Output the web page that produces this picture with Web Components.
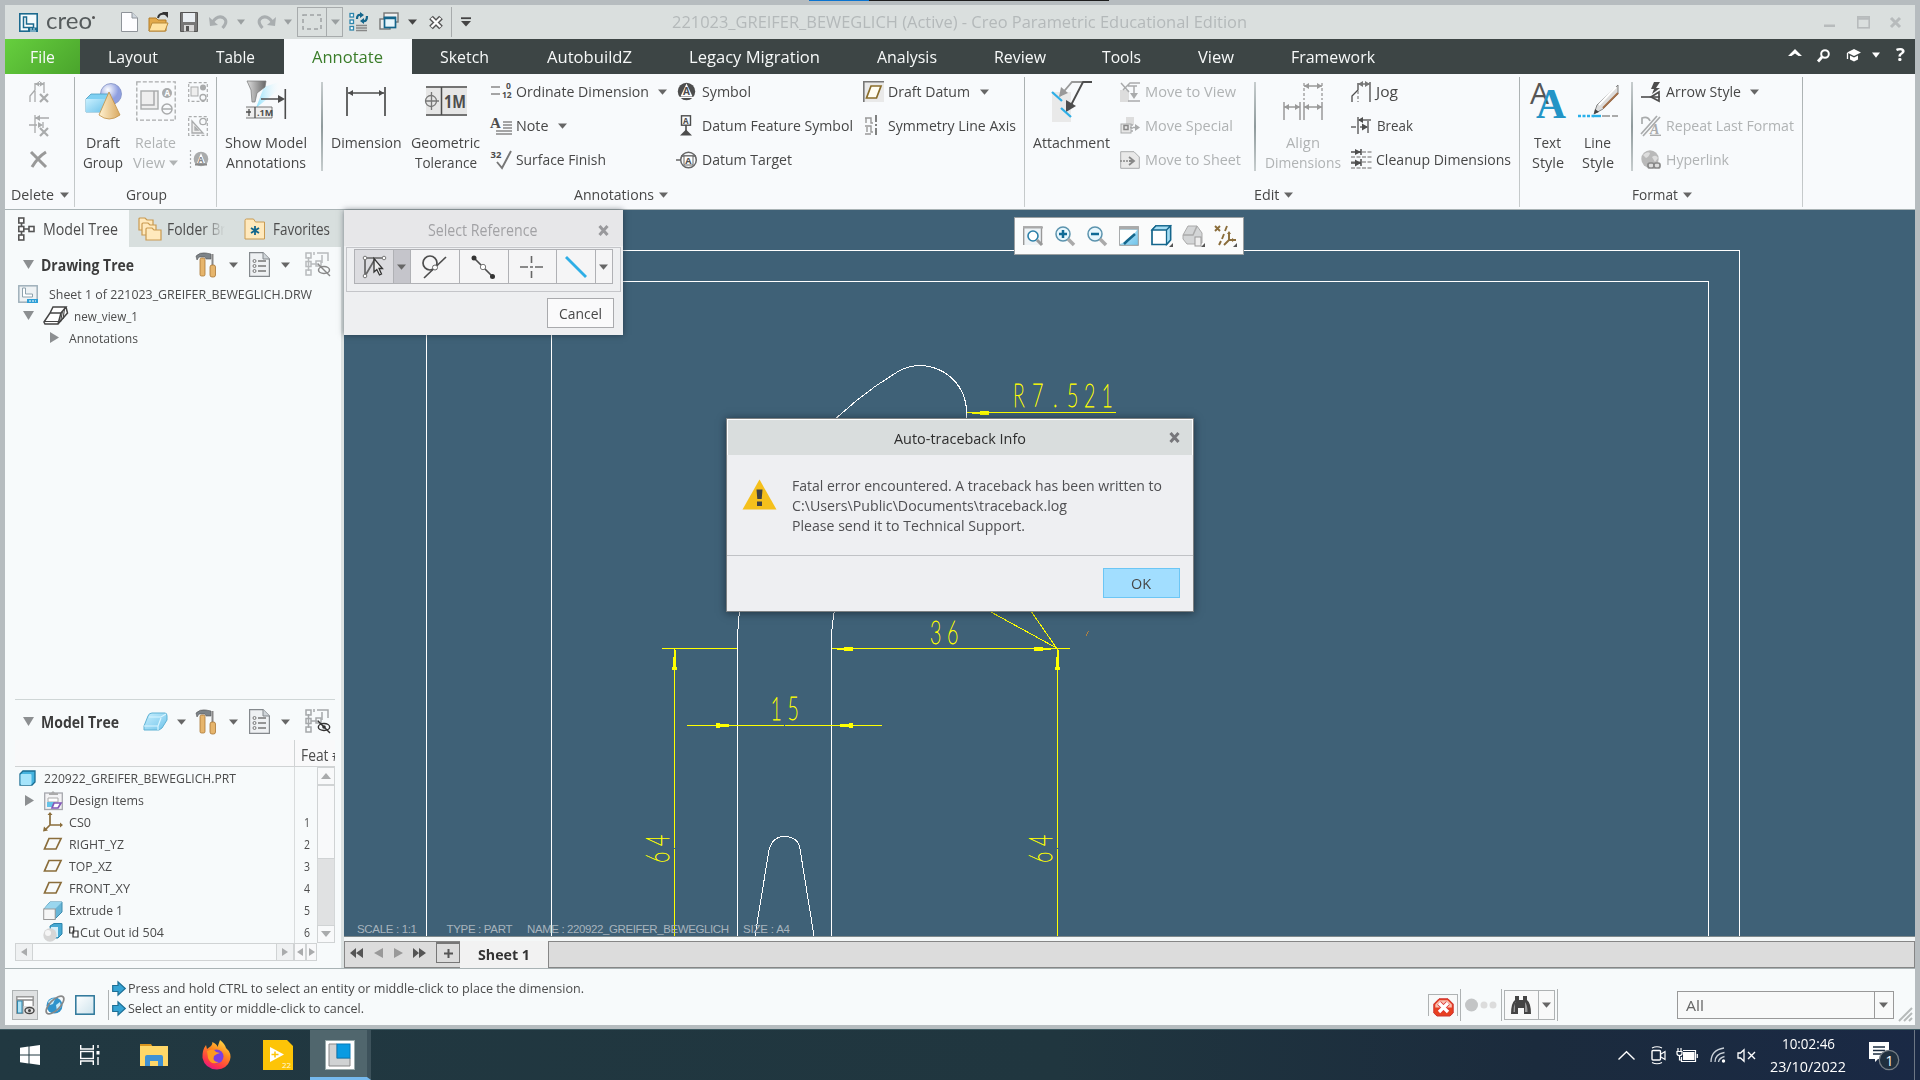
<!DOCTYPE html>
<html lang="en"><head><meta charset="utf-8"><title>Creo Parametric</title>
<style>
html,body{margin:0;width:1920px;height:1080px;overflow:hidden;font-family:"Open Sans","Noto Sans",sans-serif;color:#474747}
</style></head><body><creo-desktop></creo-desktop>
<script>
const BASE=`<style>*{box-sizing:border-box}:host{display:block}.r{display:flex;align-items:center;overflow:visible}.r>div{flex:none;display:flex;align-items:center;white-space:nowrap}.top{align-items:flex-start}svg{display:block;overflow:visible;flex:none}</style>`;
function def(name,html,setup){
  customElements.define(name,class extends HTMLElement{
    constructor(){super();this.attachShadow({mode:'open'}).innerHTML=BASE+(typeof html==='function'?'':html);}
    connectedCallback(){if(typeof html==='function')this.shadowRoot.innerHTML=BASE+html(this);if(setup)setup(this);}
  });
}
/* Lays cells [x, width, html] out in a flex row; x is measured from the window's left edge, start is the row's own. */
function row(start,h,cells,cls='',style=''){
  let p=start,o='';
  for(const [x,w,html] of cells){o+=`<div style="margin-left:${(x-p).toFixed(2)}px;width:${w}px">${html}</div>`;p=x+w;}
  return `<div class="r ${cls}" style="height:${h}px;${style}">${o}</div>`;
}
const ft=(w,s,size=15,style='')=>`<fit-text w="${w}" style="font-size:${size}px;${style}">${s}</fit-text>`;
const T=(a,b,s,size,style)=>[a,b-a,ft(b-a,s,size,style)];
const svg=(w,h,b)=>`<svg width="${w}" height="${h}" viewBox="0 0 ${w} ${h}">${b}</svg>`;
const I=(x,n)=>[x,ICON[n][0],svg(ICON[n][0],ICON[n][1],ICON[n][2])];
const ic=n=>svg(...ICON[n]);
const caret=(c='#666',w=9)=>svg(w,6,`<path d="M0 .5H${w}L${w/2} 5.8Z" fill="${c}"/>`);
const C=(x,c,w)=>[x-.5,w||9,caret(c,w)];

const K='#4d4d4d',G='#a9abac';
const st=(c,w=1.5)=>`fill="none" stroke="${c}" stroke-width="${w}"`;
const tx=(x,y,s,size,c,extra='')=>`<text x="${x}" y="${y}" font-size="${size}" fill="${c}" font-family="Open Sans" font-weight="700" ${extra}>${s}</text>`;
const gears=`<defs><linearGradient id="gb" x1="0" y1="0" x2="1" y2="1"><stop offset="0" stop-color="#c9f0ff"/><stop offset="1" stop-color="#6fc3ea"/></linearGradient><linearGradient id="gc" x1="0" x2="1"><stop offset="0" stop-color="#fff1d0"/><stop offset="1" stop-color="#d9a961"/></linearGradient><radialGradient id="gs" cx=".35" cy=".3"><stop offset="0" stop-color="#fff"/><stop offset="1" stop-color="#8f9fe0"/></radialGradient></defs>`;
const hdim=(x1,x2,y,c)=>`<path d="M${x1} ${y}H${x2}" ${st(c,1.5)}/><path d="M${x1} ${y}l5 -3v6zM${x2} ${y}l-5 -3v6z" fill="${c}"/>`;
const ICON={
 logo:[19,19,`<rect x=".8" y=".8" width="17.4" height="17.4" fill="#f4fafc" stroke="#1c6a8e" stroke-width="1.6"/><path d="M4.5 4h3v7h7v3.500h-10z" fill="#fff" stroke="#1c6a8e" stroke-width="1.5"/><rect x="9" y="14.500" width="10" height="4.500" fill="#1c6a8e"/><path d="M11 16h2m1 0h2m-5 2h6" stroke="#cfe8f2"/>`],
 doc:[17,20,`<path d="M.5 .5H11L16.500 6V19.500H.5Z" fill="#fdfdff" stroke="#8e9399"/><path d="M11 .5V6h5.500" fill="#cfd7de" stroke="#8e9399"/>`],
 open:[21,20,`<path d="M1 6h7l2 2h8v11H1z" fill="#e2a94a" stroke="#b27d28"/><path d="M4 11H20L17 19H1z" fill="#ffe2a0" stroke="#b98a3a"/><path d="M10 6q1-5 7-4" ${st('#333',2)}/><path d="M14 0h6v6z" fill="#333"/>`],
 save:[18,20,`<path d="M.5 .5h17v19h-17z" fill="#777" stroke="#555"/><rect x="3" y="1" width="12" height="9" fill="#e9eef2"/><rect x="4" y="13" width="10" height="6.500" fill="#d8d8d8"/><rect x="6" y="14" width="3" height="5" fill="#555"/>`],
 undo:[20,18,`<path d="M3 10Q8 2 14 4.500Q20 8 13.500 15" ${st('#a9aeb0',3)}/><path d="M0 4l1 9 8-1z" fill="#a9aeb0"/>`],
 redo:[20,18,`<path d="M17 10Q12 2 6 4.500Q0 8 6.500 15" ${st('#a9aeb0',3)}/><path d="M20 4l-1 9-8-1z" fill="#a9aeb0"/>`],
 selbox:[20,16,`<rect x="1" y="1" width="18" height="14" ${st('#9ea3a4',1.500)} stroke-dasharray="4 3"/>`],
 regen:[20,20,`<g fill="#fff" stroke="#2e86ad" stroke-width="1.300"><rect x="1" y="1.500" width="3.500" height="3.500"/><rect x="1" y="8" width="3.500" height="3.500"/><rect x="1" y="14.500" width="3.500" height="3.500"/></g><path d="M7 13.500h11M7 16h11M7 18.500h11" ${st('#888',1.300)}/><path d="M8 7Q8 2 12 3M18 4Q18 10 14 9" ${st('#14668c',2.200)}/><path d="M11 0l4 3-4 3zM15 6l-4 3 4 3z" fill="#14668c"/>`],
 wins:[21,20,`<rect x="5" y="1" width="14" height="9" fill="#f1f1f1" stroke="#777" stroke-width="1.400"/><rect x="1" y="7" width="10" height="10" fill="#eee" stroke="#777" stroke-width="1.400"/><rect x="5.500" y="5.500" width="11" height="10" fill="#e8f6fc" stroke="#14668c" stroke-width="1.700"/><path d="M5 6h12" stroke="#14668c" stroke-width="2.500"/>`],
 xbox:[14,13,`<path d="M2 1.500L12 11.500M12 1.500L2 11.500" ${st('#555',5.200)}/><path d="M2.500 2L11.500 11M11.500 2L2.500 11" ${st('#fff',2.400)}/>`],
 qmore:[10,11,`<path d="M0 1.200H10" ${st('#444',1.800)}/><path d="M0 4H10L5 9.500Z" fill="#444"/>`],
 min:[11,13,`<rect y="8.500" width="11" height="2.500" fill="#b7bbbc"/>`],
 max:[13,13,`<rect x=".8" y=".8" width="11.400" height="11" ${st('#b7bbbc',1.600)}/><path d="M0 2.500H13" ${st('#b7bbbc',2.500)}/>`],
 cls:[11,11,`<path d="M1 1L10 10M10 1L1 10" ${st('#b7bbbc',3)}/>`],
 up:[14,12,`<path d="M0 7L7 0L14 7H10.500L7 4.500L3.500 7Z" fill="#fff"/>`],
 find:[13,13,`<circle cx="8" cy="5" r="3.800" ${st('#fff',2)}/><path d="M5 8L1 12.500" ${st('#fff',2.800)}/>`],
 grad:[15,13,`<path d="M8 0l7 3.500-7 3.500-7-3.500z M4 6.500l4 2 4-2v4l-4 2-4-2z" fill="#fff"/><path d="M1.500 4v6" ${st('#fff',1.300)}/>`],
 d1:[20,22,`<path d="M6 2V9L1 15V21M15 1V12M6 10V21" ${st(G,1.300)}/>${hdim(6,15,3,G)}<path d="M11 13l8 8m0-8l-8 8" ${st(G,2.200)}/>`],
 d2:[20,22,`<path d="M0 10h8M6 0v18M6 3h14M14 7v6" ${st(G,1.300)}/><path d="M6 3l5-3v6zM14 10l-5-3v6z" fill="${G}"/><path d="M11 13l8 8m0-8l-8 8" ${st(G,2.200)}/>`],
 d3:[18,17,`<path d="M1 1L16 16M16 1Q8 6 2 16" ${st('#999',3)}/>`],
 draft:[37,37,`${gears}<circle cx="26" cy="11" r="10.500" fill="url(#gs)" stroke="#8290c4" stroke-width=".8"/><path d="M1 16l5-5h19v13l-5 5H1z" fill="#7fd0f2" stroke="#4a9cc0" stroke-width=".8"/><path d="M1 16h19v13H1z" fill="url(#gb)"/><path d="M24 9L14 32Q24 40 35 32Z" fill="url(#gc)" stroke="#c29045" stroke-width=".8"/>`],
 relate:[40,40,`<rect x=".8" y=".8" width="38.400" height="38.400" ${st(G,1.300)} stroke-dasharray="4 2"/><rect x="5" y="10" width="17" height="18" fill="#eee" stroke="${G}" stroke-width="1.400"/><path d="M18 10v14H5" ${st(G)}/><circle cx="31" cy="12" r="5" fill="${G}"/>${tx(28.500,15,'A',8,'#fff')}<circle cx="31" cy="28" r="5" ${st(G)}/><path d="M26 28h10" ${st(G)}/>`],
 g1:[20,20,`<rect x=".7" y=".7" width="18.600" height="18.600" ${st(G,1.200)} stroke-dasharray="3 2"/><rect x="3" y="5" width="7" height="9" fill="#eee" stroke="${G}"/><circle cx="15" cy="5.500" r="3" fill="${G}"/><circle cx="15" cy="15.500" r="3" ${st(G,1.300)}/>`],
 g2:[20,20,`<rect x=".7" y=".7" width="18.600" height="18.600" ${st(G,1.200)} stroke-dasharray="3 2"/><path d="M4 5V17H15ZM7 11v3h3z" fill="#eee" stroke="${G}" stroke-width="1.300"/><circle cx="15" cy="5.500" r="3.200" ${st(G,1.300)}/>`],
 g3:[20,20,`<path d="M1.500 0v20" ${st(G,1.200)} stroke-dasharray="2 2"/><circle cx="12" cy="9" r="7.300" fill="${G}"/><path d="M12 3L8 13h8z" fill="#fff"/>${tx(9,12.500,'A',8,'#888')}<path d="M6 14.500h12" ${st('#888',2)}/>`],
 show:[41,40,`<defs><linearGradient id="gl" x1="0" x2="1"><stop offset="0" stop-color="#8de0fb"/><stop offset="1" stop-color="#fff" stop-opacity="0"/></linearGradient><linearGradient id="gm" x1="0" x2="1"><stop stop-color="#ddd"/><stop offset="1" stop-color="#666"/></linearGradient></defs><path d="M18 6L36 0V6L10 27Z" fill="url(#gl)"/><path d="M1 0h19l-1 6-8 6-2 9H6L5 9Z" fill="url(#gm)" stroke="#777" stroke-width=".7"/><path d="M39.300 8V38M15 18H36" ${st(K,1.600)}/><path d="M39 18l-7-4v8z" fill="${K}"/><path d="M0 26H26V37H0" fill="#eee" stroke="#777"/><path d="M9 26v11M0 31h5M3 28v7" ${st(K,1.300)}/>${tx(11,35,'.1M',9,K)}`],
 dim:[40,32,`<path d="M1 2V31M39 2V31" ${st(K,1.700)}/>${hdim(2,38,8,K)}`],
 geo:[41,30,`<rect width="41" height="30" fill="#e6e6e6"/><path d="M0 1H41M0 29H41M15.500 1V29" ${st(K,1.500)}/><circle cx="5" cy="15" r="5.500" ${st('#777',1.300)}/><path d="M0 15h13M5.500 6v18" ${st('#777',1.300)}/>${tx(18,22,'1M',18,K,'textLength="22" lengthAdjust="spacingAndGlyphs"')}`],
 ord:[21,20,`<path d="M0 5h9M0 12h9" ${st('#888',1.500)}/>${tx(15,6.500,'0',8.500,K)}${tx(11,15.500,'12',8.500,K)}`],
 note:[21,20,`<text x="-1" y="12" font-size="15" font-weight="700" fill="${K}" font-family="Liberation Serif">A</text><path d="M12 6h9M12 9h9M12 12h9M5 15h16M5 18h16" ${st('#888',1.500)}/>`],
 surf:[21,20,`${tx(-.5,7.500,'32',9.500,K)}<path d="M6 12L11 18L20 1" ${st('#777',1.900)}/>`],
 sym:[19,20,`<circle cx="9.500" cy="9.500" r="8.700" fill="${K}"/><path d="M9.500 1.500L3.500 14.500H15.500Z" fill="#fff"/>${tx(6,13,'A',10,K)}<path d="M2 15.500h15" ${st('#fff',1)}/>`],
 dfs:[14,21,`<rect x="2.500" y=".8" width="9" height="9.400" ${st(K,1.400)}/>${tx(4,8.800,'A',8,K)}<path d="M7 10v7" ${st(K,1.600)}/><path d="M1 20.500L7 14.500L13 20.500Z" fill="${K}"/>`],
 dtg:[21,20,`<circle cx="12.500" cy="10" r="7.800" ${st('#666',1.500)}/><path d="M0 10h4M5 6h15" ${st('#666',1.500)}/><rect x="8" y="6" width="9" height="9" fill="#fff" stroke="#666"/>${tx(9.200,14,'A',9,K)}`],
 dd:[21,21,`<rect width="21" height="21" fill="#e9e9e9"/><path d="M.8 21V.8H21" ${st('#777',1.600)}/><path d="M8 5H18L13.500 17H3.500Z" fill="#fffdf2" stroke="#8a6d2b" stroke-width="1.700"/>`],
 sla:[14,21,`<path d="M1 3h6v5h2M2 3v5M1 11h6v6h2M3 12v5M1 19h6" ${st('#999',1.400)}/><path d="M12 0v21" ${st(K,1.400)} stroke-dasharray="7 2 2 2"/>`],
 att:[40,41,`<rect y="11" width="19" height="30" fill="#e9e9e9"/><path d="M30 1H20L8 15" ${st('#999',1.800)}/><path d="M7 16l2-10 7 6z" fill="#999"/><path d="M40 1H31L17 28" ${st(K,1.900)}/><path d="M14 31l0-12 10 6z" fill="${K}"/><path d="M0 11L10 20M9 27L19 36" ${st('#2eaee6',2.300)}/>`],
 mv:[20,20,`<path d="M0 8h9v12H0z" fill="#ddd"/><path d="M1 1l8 9M20 1H10L3 8M8 4h9M14 4v10M8 19h12" ${st(G,1.500)}/><path d="M10 11h8l-4 6z" fill="${G}"/>`],
 ms:[20,20,`<path d="M6 1h8v8H6z" fill="#ddd"/><rect x="1" y="8" width="10" height="9" fill="#e6e6e6" stroke="${G}"/><rect x="4" y="9.500" width="4" height="4" ${st('#888')}/><path d="M10 11.500h5M12 8v9" ${st(G,1.500)} stroke-dasharray="2 1"/><path d="M15 8l5 3.500-5 3.500z" fill="${G}"/>`],
 msh:[20,18,`<path d="M.7 .7H14L19.300 6V17.300H.7Z" fill="#e9e9e9" stroke="${G}"/><path d="M0 10h9" ${st('#888')} stroke-dasharray="2 1"/><path d="M9 10h4M9 6l5 4-5 4" ${st('#888',1.800)}/>`],
 algn:[40,38,`<path d="M21 1V18M39 1V18" ${st('#999',1.300)} stroke-dasharray="3 2"/>${hdim(21,39,4,'#999')}<path d="M1 20V38M17 20V38M21 20V38M39 20V38" ${st('#999',1.500)}/>${hdim(1,17,25,'#999')}${hdim(21,39,25,'#999')}`],
 jog:[20,22,`<path d="M1 21V15L7 9V2M19 1V21" ${st(K,1.300)}/><path d="M7 10V21" ${st('#888',1.300)} stroke-dasharray="3 2"/>${hdim(7,19,3,'#777')}`],
 brk:[20,20,`<path d="M0 11h5M7 1v17M17 5v12M8 4h12M9 11h7" ${st('#666',1.500)}/><path d="M7 4l5-3v6zM17 11l-6-3.500v7z" fill="${K}"/>`],
 cln:[21,21,`<path d="M0 8h21M0 13h21M0 19h21M11 3h10" ${st('#999',1.300)} stroke-dasharray="4 1.500"/><path d="M0 3h10M0 14h10M10 0v6M10 10v7" ${st(K,1.500)}/><path d="M4 0l6 3-6 3zM4 10.500l6 3.500-6 3.500z" fill="${K}"/>`],
 txs:[36,38,`<text x="0" y="22" font-size="30" fill="#555" font-family="Open Sans" textLength="19" lengthAdjust="spacingAndGlyphs">A</text><text x="6" y="36" font-size="43" fill="#2394c6" font-weight="700" font-family="Liberation Serif" textLength="30" lengthAdjust="spacingAndGlyphs">A</text>`],
 lns:[40,33,`<path d="M0 31H16" ${st('#28b0ea',2.400)} stroke-dasharray="3 1.500"/><path d="M15 31h8" ${st('#28b0ea',2.400)}/><path d="M24 31H40" ${st('#aaa',2)} stroke-dasharray="8 2"/><path d="M40 0L19 20L16 29L25 24L40 9Z" fill="#ddd" stroke="#777" stroke-width=".9"/><path d="M40 8L25 23" ${st('#a3704a',2)}/><path d="M38 2L21 20" ${st('#fff',2)}/><path d="M16 29l1-5 4 3z" fill="#444"/>`],
 arr:[20,20,`<path d="M0 15H19" ${st(K,1.600)}/><path d="M19 0H13L10 7H13L11 12L19 6H15Z" fill="${K}"/><path d="M18 10L10 15L18 19Z" ${st(K,1.700)}/>`],
 rep:[20,20,`<path d="M1 8V2Q7 0 9 5M2 20L19 1M0 18L16 0" ${st(G,1.700)}/><text x="9" y="18" font-size="14" font-style="italic" font-weight="700" fill="${G}" font-family="Liberation Serif">A</text><path d="M9 19.300h11" ${st(G,1.400)}/>`],
 hyp:[20,20,`<circle cx="9" cy="9" r="8.700" fill="#b9b9b9"/><path d="M2 5q4-4 7-2q-1 4-4 5zM11 7q4-3 6 1l-3 4z" fill="#ddd"/><rect x="7" y="13" width="6" height="5" rx="2" fill="#ddd" stroke="#888" stroke-width="1.700"/><rect x="13" y="13" width="6" height="5" rx="2" fill="#ddd" stroke="#888" stroke-width="1.700"/>`],
 tree:[17,24,`<g fill="#fff" stroke="#555" stroke-width="1.600"><path d="M3.500 5v14M4 12h8"/><rect x=".8" y="1" width="5" height="5"/><rect x=".8" y="9.500" width="5" height="5"/><rect x=".8" y="18" width="5" height="5"/><rect x="11" y="9.500" width="5" height="5"/></g>`],
 folders:[24,24,`<g fill="#ffe9bd" stroke="#c99a50" stroke-width="1.200"><path d="M1 2q0-1 1-1h5l2 2h6v10H1z"/><path d="M4 7q0-1 1-1h5l2 2h6v10H4z"/><path d="M8 12q0-1 1-1h5l2 2h7v10H8z"/></g>`],
 fav:[22,22,`<path d="M1 2.500q0-1.500 1.500-1.500h7l2 3h9v17H1z" fill="#ffe9bd" stroke="#c99a50"/><path d="M11 8v9M7 10l8 5M15 10l-8 5" ${st('#14668c',1.800)}/>`],
 tools:[21,26,`<path d="M0 4q4-4 10-3l5 1v5h-5l-1-2H3L1 8z" fill="#7c8388" stroke="#555" stroke-width=".6"/><rect x="4" y="6" width="5" height="18" rx="1.500" fill="#e6b56c" stroke="#a87635" stroke-width=".8"/><path d="M16.500 2v12" ${st('#888',2)}/><rect x="14" y="13" width="5.500" height="12" rx="2" fill="#e6b56c" stroke="#a87635" stroke-width=".8"/>`],
 list:[21,25,`<path d="M.6 .6H14L20.400 7V24.400H.6Z" fill="#eef1f3" stroke="#84898d" stroke-width="1.200"/><path d="M14 .6V7h6.400" fill="#cfd5d9" stroke="#84898d"/><path d="M9 9h8M9 14h8M9 19h8" ${st('#777',1.300)}/><g ${st('#777',1)}><circle cx="5.500" cy="9" r="1.500"/><circle cx="5.500" cy="14" r="1.500"/><circle cx="5.500" cy="19" r="1.500"/></g>`],
 ftree:[26,25,`<g ${st('#b8bbbd',1.500)}><path d="M3.500 5v14M6 12h8M9 3V0M12 1h11v8M17 3v8"/><rect x="1" y="1" width="5" height="5"/><rect x="1" y="9.500" width="5" height="5"/><rect x="1" y="18" width="5" height="5"/><rect x="11" y="9" width="5" height="5"/></g><ellipse cx="19" cy="18" rx="5.500" ry="3.500" ${st('#888',1.500)}/><path d="M13 12L25 24" ${st('#888',1.400)}/>`],
 ftree2:[26,25,`<g ${st('#a5a8aa',1.500)}><path d="M3.500 5v14M6 12h8M9 3V0M12 1h11v8M17 3v8"/><rect x="1" y="1" width="5" height="5"/><rect x="1" y="9.500" width="5" height="5"/><rect x="1" y="18" width="5" height="5"/><rect x="11" y="9" width="5" height="5"/></g><ellipse cx="19" cy="18" rx="5.700" ry="3.500" ${st('#333',1.400)}/><circle cx="19" cy="18" r="1.800" fill="#333"/><path d="M13 12L25 24" ${st('#333',1.400)}/>`],
 drw:[20,18,`<rect x=".8" y=".8" width="18.400" height="16.400" fill="#eef2f4" stroke="#9fb0ba" stroke-width="1.500"/><path d="M4.500 3h3v6h7v3h-10z" fill="#fff" stroke="#8fa2ad"/><path d="M9 14h11v4H9z" fill="#2e9fd6"/><path d="M11 16h7" stroke="#fff" stroke-dasharray="2 1"/>`],
 view:[25,19,`<path d="M1 16L7 7L18 7L15 18H2Z M7 7L10 1H23L18 7M23 1L24.500 7L15 18" fill="#fff" stroke="#444" stroke-width="1.500"/><path d="M19.500 5l-2 11M21.500 3l-1.500 10M1 15.500h14" ${st('#444',1.100)}/>`],
 blue:[25,19,`${gears}<path d="M1 18V14L5 4Q6 1 9 1H22Q24 1 24 4V8L19 16L16 18Z" fill="url(#gb)" stroke="#5fb2d4"/><path d="M18 6l-3 8v4M6 5h12l5-3M1 14h14" ${st('#d9f5ff',1.200)}/>`],
 part:[17,16,`<path d="M1 4L4 1H16V12L13 15H1Z" fill="#45b3df" stroke="#1a6d92" stroke-width="1.300"/><rect x="1.500" y="4" width="11" height="11" rx="1" fill="#a5e4fb"/>`],
 design:[19,19,`<rect x=".7" y="2" width="17.600" height="16.500" fill="#f3f3f5" stroke="#a5a7ad" stroke-width="1.300"/><path d="M5 4V2h2l2-2 2 2h3v2z" fill="#aaa"/><path d="M4 7h10v4H4z" fill="#fff" stroke="#aaa"/><path d="M3 11h8v5H3z" fill="#64c3e8"/><path d="M10 12h7l-3 5H8z" fill="#fff" stroke="#8359b8" stroke-width="1.700"/>`],
 cs:[20,20,`<path d="M7 2V13H18M7 13L2 18" ${st('#8a6d3b',1.700)}/><path d="M7 0l2.500 3h-5zM20 13l-3 2.500v-5zM0 19.500l1-5 4 4z" fill="#8a6d3b"/>`],
 plane:[20,18,`<path d="M6 3.500H18L13 14H1.500Z" fill="none" stroke="#8a6d3b" stroke-width="1.700"/>`],
 ext:[20,19,`<path d="M1 8L7 1H19V11L12 18V8Z" fill="#68b5d6" stroke="#3f8cae"/><path d="M7 1H19L12 8H1z" fill="#9ad6ee"/><rect x=".7" y="8" width="11.500" height="10.500" fill="#f6f6f6" stroke="#999"/>`],
 cut:[20,19,`<path d="M7 3l4-2.500H19V11l-4 4H8z" fill="#47a9d3" stroke="#2c84aa"/><path d="M8 4h7v10H8z" fill="#d7f0fa"/><circle cx="7" cy="12" r="6.700" fill="#d6d6d6"/><circle cx="5" cy="10" r="3" fill="#f5f5f5"/>`],
 cpy:[10,12,`<path d="M.7 1h4v6h-4zM4 5h5v6H4z" fill="#fff" stroke="#333" stroke-width="1.200"/>`],
 zfit:[20,20,`<path d="M.7 19V1H18.500V19" fill="#eef3f6" stroke="#999" stroke-width="1.400"/><path d="M0 1.500h20" ${st('#aaa',2)}/><circle cx="10" cy="10" r="5" fill="#fff" stroke="#2a7fa8" stroke-width="1.600"/><path d="M14 14l5 5" ${st('#999',3)}/>`],
 zin:[20,20,`<circle cx="8" cy="8" r="7" fill="#e6f6fd" stroke="#5b93ad" stroke-width="1.500"/><path d="M4 8h8M8 4v8" ${st('#0f6a96',2.500)}/><path d="M13 13l6 6" ${st('#aaa',3.500)}/>`],
 zout:[20,20,`<circle cx="8" cy="8" r="7" fill="#e6f6fd" stroke="#5b93ad" stroke-width="1.500"/><path d="M4 8h8" ${st('#0f6a96',2.500)}/><path d="M13 13l6 6" ${st('#aaa',3.500)}/>`],
 repaint:[20,20,`${gears}<rect x=".7" y=".7" width="18.600" height="18.600" fill="url(#gb)" stroke="#999"/><path d="M0 2h20" ${st('#aaa',3)}/><path d="M1 4h17q-6 10-17 14z" fill="#fff"/><path d="M16 8L8 15l-3 3" ${st('#14668c',2.500)}/>`],
 cube:[22,22,`<path d="M1 5L5 .8H19.500V15L15.500 19.500H1Z" fill="#fff" stroke="#14668c" stroke-width="1.700"/><path d="M1 5L5 .8H19.500L15.500 5ZM15.500 5L19.500 1V15L15.500 19.500Z" fill="#a6ddf3" stroke="#14668c" stroke-width="1.300"/><path d="M22 18v4h-4z" fill="#555"/>`],
 house:[22,22,`<path d="M0 10L5 1H14L19 8V18L14 19H4L0 14Z" fill="#d3d5d6" stroke="#aaa"/><path d="M0 10h10l4-9" ${st('#aaa')}/><rect x="12" y="12" width="6" height="9" fill="#eee" stroke="#999"/><path d="M22 18v4h-4z" fill="#555"/>`],
 axes:[22,22,`<path d="M0 1l5 5m0-5l-5 5M12 1l-2 5M9 9l-2 5M6 16l-2 4M14 8v7h7M14 15l-5 5" ${st('#8a6d3b',1.900)}/><path d="M14 6l2 3h-4zM20 15l-3 2v-4z" fill="#8a6d3b"/><path d="M22 18v4h-4z" fill="#555"/>`],
 x:[11,11,`<path d="M1.500 1L9.500 10M9.500 1L1.500 10" ${st('#77777b',3)}/>`],
 x2:[11,11,`<path d="M1.500 1L9.500 10M9.500 1L1.500 10" ${st('#99999c',3)}/>`],
 s1:[24,24,`<path d="M3 3H22M3 21V3M3 21L13 4" ${st('#666',1.700)}/><g fill="#fff" stroke="#777"><circle cx="3" cy="3" r="1.800"/><circle cx="22" cy="3" r="1.800"/><circle cx="3" cy="21" r="1.800"/></g><path d="M12 3.500V17L14.800 14.500L17.500 20L19.500 19L17 13.500H20.500Z" fill="#eee" stroke="#333" stroke-width="1.300"/>`],
 s2:[25,24,`<circle cx="8" cy="8" r="7" ${st(K,1.700)}/><path d="M24 2L2 23" ${st(K,1.700)}/><circle cx="13" cy="12.500" r="2.500" fill="#fff" stroke="#666"/>`],
 s3:[25,24,`<path d="M3 3L21 21" ${st(K,1.700)}/><circle cx="3" cy="3" r="2.500" fill="#333"/><circle cx="21.500" cy="21.500" r="2.500" fill="#333"/><circle cx="12" cy="12" r="2.700" fill="#fff" stroke="#777"/>`],
 s4:[23,22,`<path d="M0 11H8M15 11H23M11.500 0V7M11.500 15V22M10 11h3" ${st('#666',1.600)}/>`],
 s5:[22,22,`<path d="M1 1L21 21" ${st('#2eaee6',2.800)}/>`],
 warn:[35,31,`<path d="M17.500 .5L34.500 30.500H.5Z" fill="#f5c01c"/><path d="M14.500 10.500h6l-.8 9.500h-4.400zM15 22.500h5v4.500h-5z" fill="#3f4144"/>`],
 nav:[18,18,`<rect x=".8" y=".8" width="16.400" height="16.400" fill="#fff" stroke="#999" stroke-width="1.500"/><path d="M1 4h16M7 4v13" ${st('#888')}/><rect x="1.500" y="5" width="4.500" height="12" fill="#aee2f6" stroke="#2e86ad"/><rect x="7.500" y="10" width="12" height="9" fill="#e0e0e0"/><ellipse cx="13.500" cy="14.500" rx="4.500" ry="3" ${st('#444',1.400)}/><circle cx="13.500" cy="14.500" r="1.500" fill="#444"/>`],
 globe:[20,20,`<circle cx="9.500" cy="10.500" r="8" fill="#2e93cc"/><path d="M3 7q4-5 7-3l-2 5-3 1zM11 10l4-3 1 5-4 4z" fill="#c4eaf9"/><ellipse cx="10" cy="10" rx="11.500" ry="5" ${st('#888',1.700)} transform="rotate(-45 10 10)"/>`],
 sq:[20,20,`<defs><linearGradient id="sq1" x1="0" y1="0" x2="1" y2="1"><stop stop-color="#fff"/><stop offset="1" stop-color="#cde3ec"/></linearGradient></defs><rect x=".8" y=".8" width="18.400" height="18.400" fill="url(#sq1)" stroke="#2b7699" stroke-width="1.500"/>`],
 msg:[14,15,`<path d="M.7 4.500H6V.8L13.300 7.500L6 14.200V10.500H.7Z" fill="#35a3d3" stroke="#1d6f96" stroke-width="1.200"/>`],
 stop:[21,18,`<path d="M6 .8H15L20.200 6V15L17 18H4L.8 15V6Z" fill="#e84020" stroke="#c33"/><path d="M6.500 2.200h8l4.300 4.300v3H2.300v-3z" fill="#f8c0b2"/><path d="M6 5l9 9m0-9l-9 9" ${st('#d33',5)}/><path d="M6 5l9 9m0-9l-9 9" ${st('#fff',3.300)}/>`],
 dots:[32,14,`<circle cx="6.500" cy="7" r="6.500" fill="#c3c5c6"/><circle cx="19" cy="7" r="3.500" fill="#dcdcdc"/><circle cx="28" cy="7" r="3.500" fill="#dcdcdc"/>`],
 bino:[20,19,`<path d="M4 0h4v4h4V0h4v4q4 3 4 14h-7v-6H7v6H0Q0 7 4 4z" fill="#444"/><path d="M4.500 6q-2 4-2 10h1.500V6zM14 6v10h2.500q0-7-2.500-10z" fill="#999"/>`],
 grip:[14,14,`<path d="M1 14L14 1M6 14L14 6M11 14l3-3" ${st('#b6baba',2)}/>`],
 win:[20,20,`<path d="M0 2.800L8.500 1.600V9.500H0ZM9.500 1.400L20 0V9.500H9.500ZM0 10.500H8.500V18.400L0 17.200ZM9.500 10.500H20V20L9.500 18.600Z" fill="#fff"/>`],
 tv:[20,20,`<path d="M.7 0V4H13.300V0M.7 20V16H13.300V20M18 0v3M18 12v8" ${st('#fff',1.400)}/><rect x=".7" y="6.500" width="12.600" height="7" ${st('#fff',1.400)}/><rect x="16.500" y="6" width="3" height="3.500" fill="#fff"/>`],
 fold:[28,24,`<path d="M0 1h11l2 3H0z" fill="#d9951f"/><path d="M0 3H28V23H0Z" fill="#ffd768"/><path d="M5 23V14q0-2 2-2h14q2 0 2 2v9h-5v-5h-8v5z" fill="#3f91d4"/>`],
 fox:[29,30,`<defs><linearGradient id="fx" x1=".8" y1="0" x2=".3" y2="1"><stop stop-color="#ffe14a"/><stop offset=".4" stop-color="#ff8a1e"/><stop offset=".8" stop-color="#ff3647"/><stop offset="1" stop-color="#e3168c"/></linearGradient></defs><path d="M18 0Q23 4 24 8Q30 13 28 20Q25 29 15 29.500Q3 29 .5 18Q0 10 4 5L5 9L9 6Q11 3 10 2Q15 4 15.500 7Z" fill="url(#fx)"/><circle cx="14.500" cy="16.500" r="7" fill="#7b3fe0"/><path d="M5 11Q12 8 14 12L18 13Q14 14 12 16Q10 22 17 22Q9 26 6 18Z" fill="#ff9a1f"/>`],
 yel:[30,30,`<path d="M0 0H24L30 6V30H0Z" fill="#fdc407"/><path d="M7 7V22L21 14.500Z" fill="#fff"/><path d="M8.500 14.500h7M12 11.500v6" ${st('#fdc407',1.500)}/><text x="19" y="27.500" font-size="8" fill="#fff8d8" font-family="Open Sans">22</text>`],
 app:[30,30,`<rect x=".5" y=".5" width="29" height="29" fill="#fff" stroke="#9aa"/><path d="M4 4H12V18H25V26H4Z" fill="#d0d2d3" stroke="#888"/><rect x="12" y="4" width="13" height="14" fill="#0a9be2" stroke="#067ab8"/>`],
 chev:[17,9,`<path d="M.5 8.500L8.500 .8L16.500 8.500" ${st('#fff',1.400)}/>`],
 cam:[15,18,`<rect x="1" y="4.500" width="8.500" height="9.500" rx="1" ${st('#fff',1.400)}/><path d="M10 8l4-2.500v8L10 11M1 2q5-2.500 10 0M1 16.500q5 2.500 10 0" ${st('#fff',1.200)}/>`],
 bat:[21,15,`<path d="M1 0v3M4 0v3M0 3.500h5v2q0 2-2.500 2T0 5.500zM2.500 7v5H5" ${st('#fff',1.200)}/><rect x="6" y="4" width="11.500" height="8" fill="#fff"/><path d="M6 2.500h12.500v11H4.500V9M20.300 6v4" ${st('#fff',1.200)}/>`],
 wifi:[16,16,`<path d="M1 15Q1 3 14 1M5 15Q5 7 14.500 5.500M8.500 15Q9 11 14.500 9.500" ${st('#c9d0d8',1.300)}/><circle cx="13.500" cy="14" r="1.700" fill="#fff"/>`],
 spk:[19,13,`<path d="M1 4h2.500L7 .8V12.200L3.500 9H1z" ${st('#fff',1.300)}/><path d="M11 3l7 7m0-7l-7 7" ${st('#fff',1.400)}/>`],
 noti:[32,32,`<path d="M0 3H20V20H9L6 23V20H0Z" fill="#fff"/><path d="M4 8h12M4 11.500h12M4 15h9" ${st('#1b2c40',1.300)}/><circle cx="20" cy="21" r="9.700" fill="#20303f" stroke="#777f86" stroke-width="1.300"/><text x="16.500" y="26.500" font-size="14" fill="#fff" font-family="Open Sans">1</text>`]
};

def('fit-text',`<style>:host{display:inline-block;white-space:nowrap;line-height:20px;height:20px}span{display:inline-block;transform-origin:0 50%}</style><span><slot></slot></span>`,e=>{
  const s=e.shadowRoot.querySelector('span'),w=+e.getAttribute('w'),n=s.getBoundingClientRect().width;
  e.style.width=w+'px';if(n)s.style.transform=`scaleX(${w/n})`;
});
def('title-bar',()=>`<style>:host{height:34px;background:#dadfde}.sel{width:46px;height:30px;border:1px solid #a7abac;display:flex;align-items:center}.sel i{width:29px;height:28px;border-right:1px solid #a7abac;display:flex;align-items:center;justify-content:center;margin-right:4px}</style>`+
 row(5,34,[I(19,'logo'),T(46,92,'creo',23,'color:#565c5d;font-family:Lato;line-height:16px'),[92,3,'<b style="width:3px;height:3px;background:#555;border-radius:2px;margin-bottom:9px"></b>'],I(121,'doc'),I(148,'open'),I(180,'save'),I(209,'undo'),C(237,'#9a9fa0',8),I(256,'redo'),C(284,'#9a9fa0',8),
 [297,46,`<div class="sel"><i>${ic('selbox')}</i>${caret('#9a9fa0')}</div>`],I(349,'regen'),I(379,'wins'),C(408,'#444'),I(429,'xbox'),[451,1,'<b style="width:1px;height:30px;background:#a7abac"></b>'],I(461,'qmore'),T(671.500,1246.500,'221023_GREIFER_BEWEGLICH (Active) - Creo Parametric Educational Edition',16.5,'color:#b4b9ba'),I(1824,'min'),I(1857,'max'),I(1890,'cls')]));
def('menu-tab',()=>`<style>:host{height:35px;display:flex;align-items:center;justify-content:center;color:#f7f9f9;padding-right:.6px}:host([file]){background:linear-gradient(135deg,#66cf3e,#4aa42c)}:host([active]){background:#f8fafc;color:#3b7d2a}</style><slot></slot>`);
def('menu-bar',()=>`<style>:host{height:35px;background:#3d4545;display:flex}menu-tab{box-sizing:border-box}</style>`+
 [['File',75,25,'file'],['Layout',107,50],['Table',97,39],['Annotate',128,71,'active'],['Sketch',106,49],['AutobuildZ',143,85],['Legacy Migration',187,131],['Analysis',118,60],['Review',108,52],['Tools',96,39],['View',93,36],['Framework',141,84]].map(([t,w,tw,a=''])=>`<menu-tab ${a} style="width:${w}px">${ft(tw,t,16.5)}</menu-tab>`).join('')+
 row(1404,32,[I(1788,'up'),I(1817,'find'),I(1846,'grad'),C(1872,'#fff',8),T(1896,1905,'?',17,'color:#fff;font-weight:700')]));

const stack=(start,rows)=>`<section>${rows.map(r=>row(start,34,r)).join('')}</section>`;
const big=(w,n,lines,c)=>`<section class="big" style="width:${w}px;${c?'color:'+c:''}"><figure>${ic(n)}</figure>${lines.map(l=>`<p>${l}</p>`).join('')}</section>`;
def('ribbon-group',()=>`<style>:host{height:135px;flex:none;background:linear-gradient(#a9afb0,#c9cdce) right 3px/1px 130px no-repeat}</style><slot></slot>`);
const G2='#b0b3b4';
const dv='<b style="width:2px;height:89px;margin-top:8px;background:linear-gradient(#c7cdce,#8f9a9c,#c7cdce)"></b>';
def('ribbon-bar',()=>`<style>:host{height:136px;background:#f8fafc;display:flex;border-bottom:1px solid #a9b3b5}section{padding-top:.5px}.big{padding-top:7px;display:flex;flex-direction:column;align-items:center}figure{margin:0 0 12px;height:40px;display:flex;align-items:center}p{margin:0 .4px 0 0;height:20px;display:flex;align-items:center;gap:4px}fit-text{height:22px}.top>div{align-items:flex-start}</style>`+
 [[5,70,[[27,24,stack(27,[[I(29,'d1')],[I(29,'d2')],[I(30,'d3')]])]],[T(11,54,'Delete'),C(60)]],
 [75,142,[[82,43,big(43,'draft',[ft(34,'Draft'),ft(40,'Group')])],[133,46,big(46,'relate',[ft(41,'Relate'),ft(32,'View')+caret(G2)],G2)],[188,21,stack(188,[[I(188,'g1')],[I(188,'g2')],[I(189,'g3')]])]],[T(126,167,'Group')]],
 [217,808,[[221,91,big(91,'show',[ft(82,'Show Model'),ft(80,'Annotations')])],[321,2,dv],[329,74,big(74,'dim',[ft(70.5,'Dimension')])],[410,72,big(72,'geo',[ft(69,'Geometric'),ft(62,'Tolerance')])],
  [490,185,stack(490,[[I(491,'ord'),T(516,649,'Ordinate Dimension'),C(658)],[I(491,'note'),T(516,548.5,'Note'),C(558)],[I(491,'surf'),T(516,606,'Surface Finish')]])],
  [675,185,stack(675,[[I(677,'sym'),T(701.5,750.5,'Symbol')],[I(679,'dfs'),T(701.5,852.5,'Datum Feature Symbol')],[I(676,'dtg'),T(701.5,791.5,'Datum Target')]])],
  [862,155,stack(862,[[I(863,'dd'),T(888,970,'Draft Datum'),C(980)],[I(864,'sla'),T(888,1016,'Symmetry Line Axis')],[]])]],[T(574,654,'Annotations'),C(659)]],
 [1025,495,[[1029,85,big(85,'att',[ft(77,'Attachment')])],[1119,124,stack(1119,[[I(1120,'mv'),T(1145,1236,'Move to View',15,'color:'+G2)],[I(1120,'ms'),T(1145,1233,'Move Special',15,'color:'+G2)],[I(1120,'msh'),T(1145,1241,'Move to Sheet',15,'color:'+G2)]])],[1254,2,dv],[1263,80,big(80,'algn',[ft(34,'Align'),ft(76,'Dimensions')],G2)],
  [1350,162,stack(1350,[[I(1351,'jog'),T(1376,1398,'Jog')],[I(1351,'brk'),T(1377,1413,'Break')],[I(1351,'cln'),T(1376,1511,'Cleanup Dimensions')]])]],[T(1253.500,1279,'Edit'),C(1284)]],
 [1520,283,[[1529,38,big(38,'txs',[ft(27,'Text'),ft(32,'Style')])],[1578,40,big(40,'lns',[ft(27,'Line'),ft(32,'Style')])],[1631,2,dv],
  [1640,155,stack(1640,[[I(1641,'arr'),T(1666,1741,'Arrow Style'),C(1750)],[I(1641,'rep'),T(1666,1794,'Repeat Last Format',15,'color:'+G2)],[I(1641,'hyp'),T(1666,1729,'Hyperlink',15,'color:'+G2)]])]],[T(1632,1678,'Format'),C(1683)]]
 ].map(([x,w,c,l])=>`<ribbon-group style="width:${w}px">${row(x,107,c,'top')}${row(x,27,l)}</ribbon-group>`).join(''));

const dn=x=>[x,11,svg(11,9,'<path d="M0 0H11L5.500 9Z" fill="#8c8f91"/>')],rt=x=>[x,9,svg(9,11,'<path d="M0 0V11L9 5.500Z" fill="#8c8f91"/>')];
const tri=(d,c='#a9abac')=>svg(8,8,`<path d="${{l:'M7 0V8L1 4Z',r:'M1 0V8L7 4Z',u:'M-1 7H9L4 1Z',d:'M-1 1H9L4 7Z'}[d]}" fill="${c}"/>`);
def('tree-panel',()=>{
 const f=[['cs','CS0',91],['plane','RIGHT_YZ',124],['plane','TOP_XZ',112],['plane','FRONT_XY',130],['ext','Extrude 1',123]];
 return `<style>:host{width:336px;height:758px;background:#f7fafb;overflow:hidden;color:#4c4c4c}.tabs{display:flex;background:#d8dfde;height:37px}.a{background:#f7fafb;width:124px}.up{height:489px}.tb{margin-left:10px;width:320px}.dl{border-top:1px solid #cfd6d6;margin-left:10px;width:320px}.hd{height:27px;background:#f9f9fa;border-bottom:1px solid #d0d3d4;display:flex;justify-content:flex-end}.hd div{width:41px;border-left:1px solid #d0d3d4;overflow:hidden;padding:4px 0 0 6px;display:flex;align-items:center}.bd{display:flex;height:176px;overflow:hidden}.rows{width:302px;background:linear-gradient(#d9dcdd,#d9dcdd) 279px 0/1px 100% no-repeat}.sb{width:18px;background:#e0e1e2;border:1px solid #d4d7d8}.b{display:flex;align-items:center;justify-content:center;background:#f8f9fa;border:1px solid #d0d3d4}.sb .b{width:18px;height:18px;margin-left:-1px}.hs{display:flex;height:18px;width:302px}.fade{-webkit-mask:linear-gradient(90deg,#000 60%,transparent 98%)}</style>
 <div class="up"><div class="tabs"><div class="a">${row(5,37,[I(18,'tree'),T(43,118,'Model Tree',15.5)])}</div>${row(129,37,[I(138,'folders'),[167,59,`<div class="fade">${ft(59,'Folder Br',15.5)}</div>`],I(244,'fav'),T(273,330,'Favorites',15.5)])}</div>`+
 row(5,35.5,[dn(22.5),T(41,134,'Drawing Tree',15.5,'font-weight:700;color:#3c3c3c'),I(196,'tools'),C(229),I(249,'list'),C(281),I(305,'ftree')])+
 row(5,22,[I(18,'drw'),T(49,312,'Sheet 1 of 221023_GREIFER_BEWEGLICH.DRW',13)])+row(5,22,[dn(22.5),I(43,'view'),T(74,138,'new_view_1',13)])+row(5,22,[rt(49.5),T(69,138,'Annotations',13)])+
 `</div><div class="dl"></div>`+row(5,40,[dn(22.5),T(41,119,'Model Tree',15.5,'font-weight:700;color:#3c3c3c'),I(143,'blue'),C(177),I(196,'tools'),C(229),I(249,'list'),C(281),I(305,'ftree2')],'','padding-top:3px')+
 `<div class="tb"><div class="hd"><div>${ft(40,'Feat #',15.5)}</div></div><div class="bd"><div class="rows">`+
 row(15,22,[I(19,'part'),T(44,236,'220922_GREIFER_BEWEGLICH.PRT',13)])+row(15,22,[rt(25),I(44,'design'),T(69,144,'Design Items',13)])+
 f.map(([i,t,e],n)=>row(15,22,[I(43,i),T(69,e,t,13),T(304,310,n+1,13)])).join('')+row(15,22,[I(43,'cut'),I(69,'cpy'),T(80,164,'Cut Out id 504',13),T(304,310,6,13)])+
 `</div><div class="sb"><div class="b" style="margin-top:-1px">${tri('u')}</div><div class="b" style="height:74px"></div><div class="b" style="margin-top:66px">${tri('d')}</div></div></div>
 <div class="hs"><div class="b" style="width:18px;background:#eff1f2">${tri('l')}</div><div class="b" style="flex:1;border-width:1px 0;background:#f8fafb"></div><div class="b" style="width:18px;background:#eff1f2">${tri('r')}</div><div class="b" style="width:12px">${tri('l')}</div><div class="b" style="width:11px">${tri('r')}</div></div></div>`});

const yt=(xs,y,s,k=.62)=>`<g transform="translate(0 ${y}) scale(${k} 1)" fill="#ff0" font-family="Lato" font-weight="100" font-size="31.500" stroke="#ff0" stroke-width=".75"><text>${[...s].map((c,i)=>`<tspan x="${(xs[i]/k).toFixed(1)}">${c}</tspan>`).join('')}</text></g>`;
def('drawing-canvas',()=>`<style>:host{height:726px;background:#3f6177;overflow:hidden}</style>
<svg width="1571" height="726" viewBox="344 210 1571 726" style="overflow:hidden" shape-rendering="crispEdges">
<g fill="none" stroke="#fff" stroke-width="1"><path d="M426.500 936V250.500H1739.500V936M551.500 936V281.500H1708.500V936"/>
<path d="M834 420L856 401L875 386.500L898 371.500Q909 365.500 920 365.500C947 366.500 966.500 387 966.500 412V419M739.500 610L738.500 622L737.500 636V936M834.500 610L832.500 624L831.500 634V936M755 936L768 856Q770 836.500 784.500 836.500Q798 836.500 800 849L814 936"/></g>
<g fill="none" stroke="#ff0" stroke-width="1"><path d="M967 412.500H1116M662 648.500H737M832 648.500H1070M985.500 609L1056.500 648L1029.500 609M674.500 649V848M674.500 849V936M1057.500 649V848M1057.500 849V936M687 725.500H784M785 725.500H882"/></g>
<path d="M1086 636L1088.500 631" stroke="#b08040"/>
<path d="M972 412h8v2h-8zM980 411h9v4h-9zM837 648h8v2h-8zM844 647h9v4h-9zM1042 648h9v2h-9zM1034 647h9v4h-9zM674 650h2v7h-2zM673 657h3v10h-3zM672 667h5v3h-5zM1057 650h2v7h-2zM1056 657h3v10h-3zM1055 667h5v3h-5zM716 723h4v5h-4zM719 724h10v3h-10zM849 723h4v5h-4zM840 724h10v3h-10z" fill="#ff0"/>
<g shape-rendering="auto">${yt([1013,1032,1053,1067,1084,1101.500],407,'R7.521')}${yt([930,947],644,'36')}${yt([770.500,787.500],719.500,'15')}
<g transform="translate(669 863) rotate(-90)">${yt([0,17],0,'64')}</g><g transform="translate(1052 863) rotate(-90)">${yt([0,17],0,'64')}</g>
<g font-family="Liberation Sans" font-size="11.500" fill="#a8b4bd"><text x="357" y="933" textLength="60">SCALE : 1:1</text><text x="446.500" y="933" textLength="66">TYPE : PART</text><text x="527" y="933" textLength="202">NAME : 220922_GREIFER_BEWEGLICH</text><text x="743" y="933" textLength="47">SIZE : A4</text></g></g>
</svg>`);
def('sheet-bar',()=>{const a=(d,c)=>svg(13,10,`<path d="${d}" fill="${c}"/>`);
return `<style>:host{height:32px;background:#f4f7f7;border-top:1px solid #7f8a8d;padding-top:4px}.w{display:flex;height:27px}.n{width:116px;background:#dcdcdc;border:1px solid #868686;border-right:0}.t{width:88px;background:#f2f2f2;display:flex;justify-content:center;align-items:center;color:#333;padding-bottom:2px}.e{flex:1;background:#dcdcdc;border:1px solid #868686}.p{width:24px;height:21px;border:1px solid #777;border-top-width:2px;display:flex;justify-content:center;align-items:center}</style><div class="w"><div class="n">${row(345,25,[[350,13,a('M6 0V10L0 5ZM13 0V10L6 5Z','#555')],[373,10,a('M10 0V10L1 5Z','#999')],[393.5,10,a('M0 0V10L9 5Z','#999')],[413,13,a('M0 0V10L6 5ZM6 0V10L13 5Z','#555')],[436,24,`<div class="p">${svg(9,9,'<path d="M0 4.500H9M4.500 0V9" stroke="#555" stroke-width="2"/>')}</div>`]],'','margin-top:-2px')}</div><div class="t">${ft(52,'Sheet 1',15,'font-weight:700')}</div><div class="e"></div></div>`});
def('status-bar',()=>{const v=h=>`<b style="width:1px;height:${h}px;background:#aeb2b3"></b>`;return `<style>:host{height:56px;background:#f7fafb;color:#4a4a4a}.m{display:flex;flex-direction:column}.m div{display:flex;align-items:center;height:20px;gap:2px}.f{display:flex;align-items:center;border:1px solid #aeb2b3;background:#f8f9f9}</style>`+
 row(5,72,[[12,26,`<div class="f" style="width:26px;height:30px;background:#dfe1e2;justify-content:center">${ic('nav')}</div>`],I(45,'globe'),I(75,'sq'),[108,1,v(30)],[112,475,`<div class="m" style="margin-top:-14px"><div>${ic('msg')}${ft(456,'Press and hold CTRL to select an entity or middle-click to place the dimension.',13)}</div><div>${ic('msg')}${ft(236,'Select an entity or middle-click to cancel.',13)}</div></div>`],
 [1428,30,`<div class="f" style="width:30px;height:22px;border-bottom:0;justify-content:center;align-items:flex-end">${ic('stop')}</div>`],[1460,1,v(32)],I(1465,'dots'),[1501,1,v(32)],[1504,51,`<div class="f" style="width:51px;height:30px"><div style="display:flex;justify-content:center;align-items:center;width:34px;height:28px;border-right:1px solid #aeb2b3;margin-right:3px;padding-right:2px">${ic('bino')}</div>${caret()}</div>`],[1557,1,v(32)],
 [1677,217,`<div class="f" style="width:217px;height:28px;border-color:#999"><div style="width:197px;height:26px;border-right:1px solid #999;padding:2px 7.5px;margin-right:4px">${ft(18,'All',15,'color:#666')}</div>${caret()}</div>`],[1898,14,`<div style="padding-top:18px">${ic('grip')}</div>`]])});
def('task-bar',()=>`<style>:host{height:51px;background:linear-gradient(90deg,#213841 0,#20363f 55%,#1b2b3d 80%,#1a2945);border-top:1px solid #3d5961;color:#fff}.act{width:61px;height:50px;background:#50666d;border-bottom:3px solid #76b9ed;border-right:4px solid #3d525b;display:flex;justify-content:center;align-items:center;padding-left:2px;padding-top:3px}.ck{display:flex;flex-direction:column;align-items:center;gap:3px;width:76px;margin-top:-1px}</style>`+
 row(0,50,[I(20,'win'),I(80,'tv'),I(140,'fold'),I(202,'fox'),I(263,'yel'),[310,61,`<div class="act">${ic('app')}</div>`],I(1618,'chev'),I(1651,'cam'),I(1677,'bat'),I(1710,'wifi'),I(1737,'spk'),[1770,76,`<div class="ck">${ft(53,'10:02:46',15)}${ft(76,'23/10/2022',15)}</div>`],I(1869,'noti'),[1914,1,'<b style="width:1px;height:50px;background:#6c7684"></b>']]));
def('view-toolbar',()=>`<style>:host{position:absolute;left:1014px;top:217px;width:230px;height:38px;background:#fafbfb;border:1px solid #9a9fa1}</style>`+row(1015,36,[I(1023,'zfit'),I(1055,'zin'),I(1087,'zout'),I(1119,'repaint'),I(1151,'cube'),I(1183,'house'),I(1215,'axes')]));
def('select-dialog',()=>{const b=(w,c,bg='#f5f5f6')=>`<div class="b" style="width:${w}px;background:${bg}">${c}</div>`;return `<style>:host{position:absolute;left:344px;top:210px;width:279px;height:125px;background:#eeeff1;box-shadow:0 0 6px rgba(20,30,40,.55)}.ti{background:#e7e7e9;height:36px}.tl{margin:1px 2px 0;height:45px;border:1px solid #c4c5c9;padding:1px 0 0 7px;display:flex}.b{height:35px;border:1px solid #b0b1b5;display:flex;align-items:center;justify-content:center;margin-right:-1px;padding-right:1px}.c{margin:6px 0 0 203px;width:67px;height:30px;border:1px solid #a9aaad;background:#fafafb;display:flex;align-items:center;justify-content:center}</style>
 <div class="ti">${row(344,40,[T(428,537.500,'Select Reference',15.5,'color:#a2a2a5'),I(598,'x2')])}</div><div class="tl">${b(40,ic('s1'),'#dcdce0')}${b(18,caret(),'#c5c5cb')}${b(50,ic('s2'))}${b(49.500,ic('s3'))}${b(49.500,ic('s4'))}${b(40,ic('s5'))}${b(18,caret())}</div><div class="c">${ft(43,'Cancel',15)}</div>`});
def('error-dialog',()=>`<style>:host{position:absolute;left:726px;top:418px;width:468px;height:194px;box-sizing:border-box;background:#eeeff2;border:1px solid #7c8082;box-shadow:0 1px 8px rgba(10,20,30,.6)}.ti{border:1px solid #fff;border-bottom:0;background:#d9dddd;height:36px;color:#2d2d2d}.bd{display:flex;height:101px;border-bottom:1px solid #c0c2c6;padding:24px 0 0 15px}.tx{display:flex;flex-direction:column;margin:-4px 0 0 14.5px;color:#4f4f52}.ok{margin:12px 0 0 376px;width:77px;height:30px;background:#a2deff;border:1px solid #6cc6f5;display:flex;align-items:center;justify-content:center;padding:0 2px 1px 0}</style>
 <div class="ti">${row(728,36,[T(894,1026,'Auto-traceback Info',15),[1169,11,`<div style="margin-top:-1px">${ic('x')}</div>`]])}</div><div class="bd">${ic('warn')}<div class="tx">${ft(370,'Fatal error encountered. A traceback has been written to',15)}${ft(275,'C:\\Users\\Public\\Documents\\traceback.log',15)}${ft(233,'Please send it to Technical Support.',15)}</div></div><div class="ok">${ft(20,'OK',15)}</div>`);
def('creo-desktop',()=>`<style>:host{position:relative;width:1920px;height:1080px;background:#b6bcbf}.strip{height:5px;display:flex;padding-left:809px}.strip i{width:60px;height:1px;background:#0a74d0}.strip b{width:240px;height:1px;background:#1c1c1c}.win{margin:0 5px;height:1020px}.body{display:flex;height:758px}.gut{width:3px;background:#dce2e2}.main{flex:1}.st{border-top:1px solid #a9b3b5;height:57px}.f{height:4px}</style><div class="strip"><i></i><b></b></div>
 <div class="win"><title-bar></title-bar><menu-bar></menu-bar><ribbon-bar></ribbon-bar><div class="body"><tree-panel></tree-panel><div class="gut"></div><div class="main"><drawing-canvas></drawing-canvas><sheet-bar></sheet-bar></div></div><div class="st"><status-bar></status-bar></div></div><div class="f"></div><task-bar></task-bar>
 <view-toolbar></view-toolbar><select-dialog></select-dialog><error-dialog></error-dialog>`);
</script></body></html>
